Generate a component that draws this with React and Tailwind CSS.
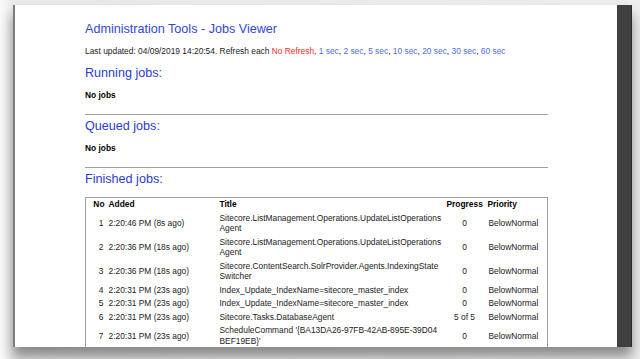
export default function App() {
  const rows = [
    ["1", "2:20:46 PM (8s ago)", ["Sitecore.ListManagement.Operations.UpdateListOperations", "Agent"], "0"],
    ["2", "2:20:36 PM (18s ago)", ["Sitecore.ListManagement.Operations.UpdateListOperations", "Agent"], "0"],
    ["3", "2:20:36 PM (18s ago)", ["Sitecore.ContentSearch.SolrProvider.Agents.IndexingState", "Switcher"], "0"],
    ["4", "2:20:31 PM (23s ago)", ["Index_Update_IndexName=sitecore_master_index"], "0"],
    ["5", "2:20:31 PM (23s ago)", ["Index_Update_IndexName=sitecore_master_index"], "0"],
    ["6", "2:20:31 PM (23s ago)", ["Sitecore.Tasks.DatabaseAgent"], "5 of 5"],
    ["7", "2:20:31 PM (23s ago)", ["ScheduleCommand '{BA13DA26-97FB-42AB-895E-39D04", "BEF19EB}'"], "0"],
  ];
  const secs = ["1 sec", "2 sec", "5 sec", "10 sec", "20 sec", "30 sec", "60 sec"];
  return (
    <div className="w-[640px] h-[359px] overflow-hidden bg-[linear-gradient(to_right,#fbfbfb_0px,#e9e9e9_13px,#eeeeee_100%)] pt-[5px] pl-[13px] font-['Liberation_Sans',Arial,sans-serif]">
      <div className="w-[619px] h-[342px] flex shadow-[0_10px_12px_rgba(0,0,0,0.42)]">
        <div className="w-[2px] bg-[#7c7c7c]" />
        <div className="flex-1 bg-white overflow-hidden pl-[70px] pt-[17.4px]">
          <div className="w-[463px] flex flex-col">
            <div className="text-[12.6px] leading-[15px] text-[#2f48d4] whitespace-nowrap">Administration Tools - Jobs Viewer</div>
            <div className="mt-[8.5px] text-[8.4px] leading-[11px] text-[#222] whitespace-nowrap">
              Last updated: 04/09/2019 14:20:54. Refresh each <span className="text-[#f42a2a]">No Refresh</span>
              {secs.map((s) => (
                <span key={s}>
                  , <span className="text-[#4f6de6]">{s}</span>
                </span>
              ))}
            </div>
            <div className="mt-[9px] text-[12.6px] leading-[15px] text-[#2a3ccf]">Running jobs:</div>
            <div className="mt-[9.5px] text-[8.4px] leading-[11px] font-bold text-black">No jobs</div>
            <div className="mt-[12.5px] h-px bg-[#a0a0a0]" />
            <div className="mt-[4px] text-[12.6px] leading-[15px] text-[#2a3ccf]">Queued jobs:</div>
            <div className="mt-[9.5px] text-[8.4px] leading-[11px] font-bold text-black">No jobs</div>
            <div className="mt-[12.5px] h-px bg-[#a0a0a0]" />
            <div className="mt-[4.5px] text-[12.6px] leading-[15px] text-[#2a3ccf]">Finished jobs:</div>
            <table className="mt-[9.5px] w-[463px] table-fixed border border-[#a0a0a0] border-collapse text-[8.4px] leading-[10.5px] text-[#222]">
              <colgroup>
                <col className="w-[21px]" />
                <col className="w-[111px]" />
                <col className="w-[227px]" />
                <col className="w-[40px]" />
                <col />
              </colgroup>
              <thead>
                <tr className="font-bold text-black">
                  <th className="text-right pr-[2px] py-[1.5px] font-bold">No</th>
                  <th className="text-left pl-[2px] py-[1.5px] font-bold">Added</th>
                  <th className="text-left pl-[2px] py-[1.5px] font-bold">Title</th>
                  <th className="text-left pl-[2px] py-[1.5px] font-bold whitespace-nowrap">Progress</th>
                  <th className="text-left pl-[3px] py-[1.5px] font-bold">Priority</th>
                </tr>
              </thead>
              <tbody>
                {rows.map((r) => (
                  <tr key={r[0]}>
                    <td className="text-right pr-[3px] py-[1.5px] align-middle">{r[0]}</td>
                    <td className="text-left pl-[2px] py-[1.5px] align-middle whitespace-nowrap">{r[1]}</td>
                    <td className="text-left pl-[2px] py-[1.5px] align-middle whitespace-nowrap">
                      {r[2].map((t, i) => (
                        <div key={i}>{t}</div>
                      ))}
                    </td>
                    <td className="text-center py-[1.5px] align-middle whitespace-nowrap">{r[3]}</td>
                    <td className="text-left pl-[4px] py-[1.5px] align-middle">BelowNormal</td>
                  </tr>
                ))}
              </tbody>
            </table>
          </div>
        </div>
        <div className="w-[15px] bg-[#404040] border-r border-[#2e2e2e]" />
      </div>
    </div>
  );
}
